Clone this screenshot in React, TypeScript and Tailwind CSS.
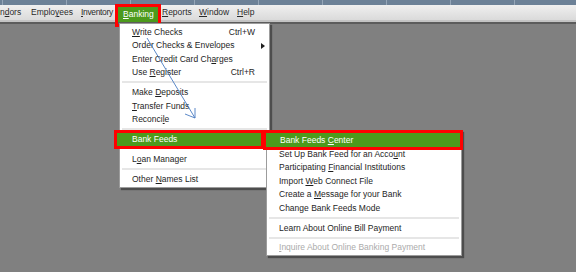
import type { ReactNode } from "react";

// "_" marks the accelerator letter, rendered underlined
const Label = ({ text }: { text: string }) => {
  const i = text.indexOf("_");
  if (i < 0) return <span>{text}</span>;
  return (
    <span className="whitespace-pre">
      {text.slice(0, i)}
      <u className="underline-offset-[1px]">{text[i + 1]}</u>
      {text.slice(i + 2)}
    </span>
  );
};

const Separator = ({ h = "h-[6.5px]" }: { h?: string }) => (
  <div className={`${h} flex items-center px-[2px]`}>
    <div className="h-[2px] w-full bg-[#e6e6e6]" />
  </div>
);

const MenuRow = ({
  label,
  shortcut,
  sub,
  disabled,
  h = "h-[13.5px]",
}: {
  label: string;
  shortcut?: string;
  sub?: boolean;
  disabled?: boolean;
  h?: string;
}) => (
  <div
    className={`${h} flex items-center pl-[12px] pr-[14px] ${
      disabled ? "text-[#ababab]" : "text-[#1e1e1e]"
    } relative`}
  >
    <span className="flex-1 whitespace-nowrap">
      <Label text={label} />
    </span>
    {shortcut && <span className="whitespace-nowrap">{shortcut}</span>}
    {sub && (
      <svg className="absolute right-[4px] top-[4px]" width="4" height="6" viewBox="0 0 4 6">
        <path d="M0 0 L4 3 L0 6 Z" fill="#1e1e1e" />
      </svg>
    )}
  </div>
);

const TopItem = ({ label, w }: { label: string; w: string }) => (
  <div className={`${w} shrink-0 whitespace-nowrap text-[#2a2a2a]`}>
    <Label text={label} />
  </div>
);

export default function App() {
  const dividers: ReactNode[] = [];
  for (let i = 0; i < 10; i++) {
    dividers.push(<div key={i} className="w-[64px] h-full shrink-0 border-l border-[#95a6b8]" />);
  }

  return (
    <div className="relative w-[576px] h-[272px] overflow-hidden bg-[#808080] font-['Liberation_Sans',Arial,sans-serif] text-[8.5px] leading-none">
      {/* title strip */}
      <div className="h-[5px] bg-[#6c8197] flex pl-[2px]">{dividers}</div>

      {/* menu bar */}
      <div className="h-[15px] bg-gradient-to-b from-[#f0f0f0] to-[#dadada] flex items-center">
        <div className="-ml-[10px] flex items-center">
          <TopItem label="Ven_dors" w="w-[41px]" />
          <TopItem label="Emplo_yees" w="w-[50px]" />
          <TopItem label="_Inventory" w="w-[37px] tracking-[-0.35px]" />
          <div className="w-[44px] shrink-0 self-start">
            <div className="mt-[2px] h-[16px] w-[41px] bg-[#4c9a1c] text-white flex items-center pl-[5px] pt-[1px] whitespace-nowrap">
              <Label text="_Banking" />
            </div>
          </div>
          <TopItem label="_Reports" w="w-[37px]" />
          <TopItem label="_Window" w="w-[38px]" />
          <TopItem label="_Help" w="w-[30px]" />
        </div>
      </div>
      <div className="h-[2px] bg-[#c4c4c4]" />
      <div className="h-[2px] bg-[#5c5c5c]" />

      {/* red box around Banking */}
      <div className="absolute left-[115px] top-[4px] w-[46px] h-[23px] border-[3px] border-[#ff0000]" />

      {/* Banking menu */}
      <div className="absolute left-[119px] top-[23px] w-[151px] h-[165px] bg-white border border-[#9c9c9c] shadow-[2px_2px_1px_rgba(0,0,0,0.4)] pt-[1px]">
        <MenuRow label="_Write Checks" shortcut="Ctrl+W" />
        <MenuRow label="Order Checks & Envelopes" sub />
        <MenuRow label="Enter Credit Card Ch_arges" />
        <MenuRow label="Use _Register" shortcut="Ctrl+R" />
        <Separator />
        <MenuRow label="Make _Deposits" />
        <MenuRow label="_Transfer Funds" />
        <MenuRow label="Reconci_le" />
        <Separator />
        <div className="h-[13.5px] -ml-[3px] mr-[8px] bg-[#4c9a1c] outline-[3px] outline-[#ff0000] flex items-center pl-[15px] text-white whitespace-nowrap">
          Bank Feeds
        </div>
        <Separator h="h-[6.5px] opacity-0" />
        <MenuRow label="L_oan Manager" />
        <Separator />
        <MenuRow label="Other _Names List" />
      </div>

      {/* Bank Feeds submenu */}
      <div className="absolute left-[266px] top-[130px] w-[196px] h-[126px] bg-white border border-[#9c9c9c] shadow-[2px_2px_1px_rgba(0,0,0,0.4)] pt-[2px]">
        <div className="h-[14px] -ml-[1px] mr-[1px] bg-[#4c9a1c] outline-[3px] outline-[#ff0000] flex items-center pl-[14px] text-white whitespace-nowrap">
          <Label text="Bank Feeds _Center" />
        </div>
        <MenuRow h="h-[13.6px]" label="Set Up Bank Feed for an Acco_unt" />
        <MenuRow h="h-[13.6px]" label="Participating _Financial Institutions" />
        <MenuRow h="h-[13.6px]" label="Import _Web Connect File" />
        <MenuRow h="h-[13.6px]" label="Create a _Message for your Bank" />
        <MenuRow h="h-[13.6px]" label="Change Bank Feeds Mode" />
        <Separator h="h-[6.4px]" />
        <MenuRow h="h-[13.6px]" label="Learn About Online Bill Payment" />
        <Separator h="h-[5.6px]" />
        <MenuRow h="h-[13.6px]" label="_Inquire About Online Banking Payment" disabled />
      </div>

      {/* blue annotation arrow */}
      <svg className="absolute left-0 top-0 pointer-events-none" width="576" height="272" viewBox="0 0 576 272">
        <g stroke="#4a7cc2" strokeWidth="0.9" fill="none">
          <line x1="147" y1="38" x2="195" y2="118" />
          <line x1="195" y1="118" x2="195" y2="108" />
          <line x1="195" y1="118" x2="185" y2="114" />
        </g>
      </svg>
    </div>
  );
}
